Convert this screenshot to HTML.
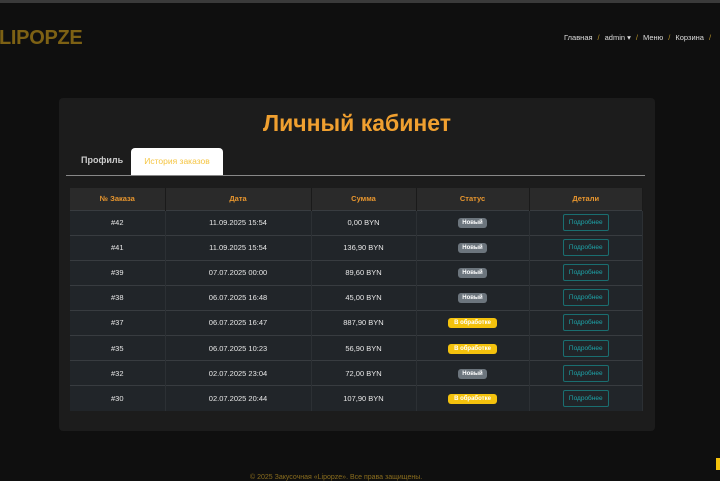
<!DOCTYPE html>
<html><head><meta charset="utf-8"><style>
*{margin:0;padding:0;box-sizing:border-box}
body{width:720px;height:480px;overflow:hidden;background:#0f0f0f;font-family:"Liberation Sans","DejaVu Sans",sans-serif;position:relative;color:#ddd}
.top{position:absolute;left:0;top:0;width:720px;height:3px;background:#3a3a3a}
.logo{position:absolute;left:-1px;top:27px;font-size:20px;font-weight:bold;color:#7d6114;letter-spacing:-0.3px}
.nav{position:absolute;left:564px;top:33px;font-size:7.5px;color:#ddd;white-space:nowrap}
.nav .s{color:#b8952a;margin:0 5px}
.card{position:absolute;left:59px;top:98px;width:596px;height:333px;background:#1c1c1c;border-radius:4px}
h1{position:absolute;left:0;width:596px;top:12px;text-align:center;font-size:23px;color:#f0a030;font-weight:bold}
.tab1{position:absolute;left:22px;top:57px;font-size:9px;color:#ccc;font-weight:bold}
.tab2{position:absolute;left:72px;top:50px;width:92px;height:28px;background:#fff;border-radius:4px 4px 0 0;color:#f5c542;font-size:8.5px;text-align:center;line-height:26px}
.line{position:absolute;left:7px;top:77px;width:579px;height:1px;background:#888}
table{position:absolute;left:11px;top:90px;width:573px;border-collapse:collapse;font-size:7.5px}
th{background:#2a2a2a;color:#e8962e;height:22px;font-weight:bold;border-right:1px solid #1a1a1a}
td{background:#212529;height:25.1px;text-align:center;border-top:1px solid #383c40;color:#e8e8e8;border-right:1px solid #2c3034}
.b{display:inline-block;font-size:6px;font-weight:bold;padding:2px 4px;border-radius:3px;color:#fff}
.n{background:#6c757d}.p{background:#f4c20d;padding:2px 6px}
.btn{display:inline-block;border:1px solid #1a6e70;color:#1ea3a8;font-size:6.5px;padding:4px 5px;border-radius:2px}
.foot{position:absolute;left:250px;top:474px;font-size:7px;color:#8a6d1e}
.side{position:absolute;left:716px;top:458px;width:4px;height:12px;background:#f4c20d}
</style></head><body>
<div class="top"></div>
<div class="logo">LIPOPZE</div>
<div class="nav">Главная<span class="s">/</span>admin ▾<span class="s">/</span>Меню<span class="s">/</span>Корзина<span class="s">/</span></div>
<div class="card">
<h1>Личный кабинет</h1>
<div class="tab1">Профиль</div>
<div class="tab2">История заказов</div>
<div class="line"></div>
<table>
<tr><th style="width:95px">№ Заказа</th><th style="width:146px">Дата</th><th style="width:105px">Сумма</th><th style="width:113px">Статус</th><th>Детали</th></tr>
<tr><td>#42</td><td>11.09.2025 15:54</td><td>0,00 BYN</td><td><span class="b n">Новый</span></td><td><span class="btn">Подробнее</span></td></tr>
<tr><td>#41</td><td>11.09.2025 15:54</td><td>136,90 BYN</td><td><span class="b n">Новый</span></td><td><span class="btn">Подробнее</span></td></tr>
<tr><td>#39</td><td>07.07.2025 00:00</td><td>89,60 BYN</td><td><span class="b n">Новый</span></td><td><span class="btn">Подробнее</span></td></tr>
<tr><td>#38</td><td>06.07.2025 16:48</td><td>45,00 BYN</td><td><span class="b n">Новый</span></td><td><span class="btn">Подробнее</span></td></tr>
<tr><td>#37</td><td>06.07.2025 16:47</td><td>887,90 BYN</td><td><span class="b p">В обработке</span></td><td><span class="btn">Подробнее</span></td></tr>
<tr><td>#35</td><td>06.07.2025 10:23</td><td>56,90 BYN</td><td><span class="b p">В обработке</span></td><td><span class="btn">Подробнее</span></td></tr>
<tr><td>#32</td><td>02.07.2025 23:04</td><td>72,00 BYN</td><td><span class="b n">Новый</span></td><td><span class="btn">Подробнее</span></td></tr>
<tr><td>#30</td><td>02.07.2025 20:44</td><td>107,90 BYN</td><td><span class="b p">В обработке</span></td><td><span class="btn">Подробнее</span></td></tr>
</table>
</div>
<div class="foot">© 2025 Закусочная «Lipopze». Все права защищены.</div>
<div class="side"></div>
</body></html>
